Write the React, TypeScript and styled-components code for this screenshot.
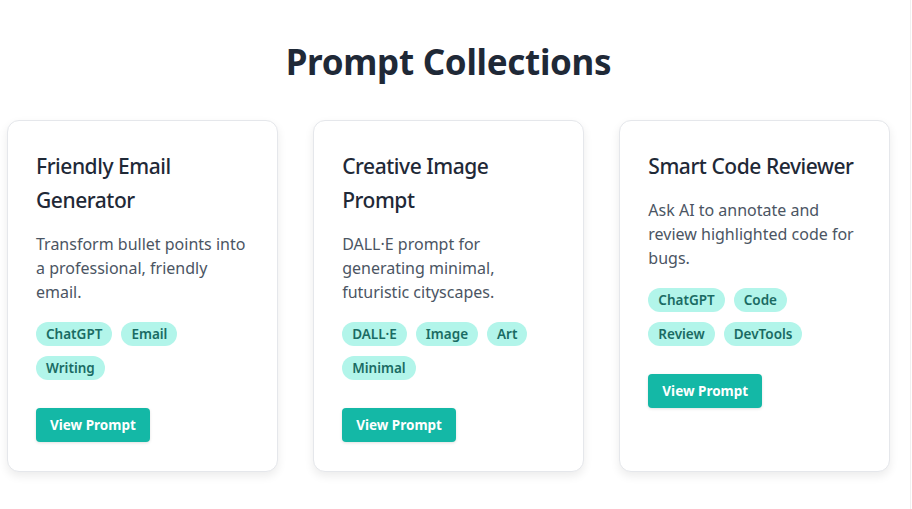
import React, { ReactElement } from 'react';
import styled, { createGlobalStyle } from 'styled-components';

const GlobalStyle = createGlobalStyle`
  html, body {
    margin: 0;
    padding: 0;
    background: #ffffff;
  }
  body {
    font-family: 'Noto Sans', 'Open Sans', sans-serif;
    color: #1f2937;
  }
  * {
    box-sizing: border-box;
  }
`;

const Page = styled.div`
  min-height: 509px;
  width: 911px;
  border-right: 1px solid #f0f0f0;
  padding: 0 20px 0 7px;
`;

const Container = styled.div`
  display: flex;
  flex-direction: column;
  align-items: center;
`;

const Heading = styled.h1`
  margin: 36px 0 0;
  font-size: 35px;
  line-height: 52px;
  font-weight: 700;
  color: #1f2937;
  letter-spacing: -0.3px;
`;

const Grid = styled.div`
  width: 100%;
  margin-top: 32px;
  display: grid;
  grid-template-columns: repeat(3, 1fr);
  gap: 35.5px;
`;

const Card = styled.div`
  display: flex;
  flex-direction: column;
  align-items: flex-start;
  background: #ffffff;
  border: 1px solid #e5e7eb;
  border-radius: 12px;
  padding: 28px;
  box-shadow: 0 4px 10px rgba(0, 0, 0, 0.08);
  height: 352px;
`;

const Title = styled.h2`
  margin: 0;
  font-size: 21px;
  line-height: 34px;
  font-weight: 500;
  color: #1f2937;
  letter-spacing: -0.45px;
`;

const Description = styled.p`
  margin: 15px 0 0;
  font-size: 16px;
  line-height: 24px;
  color: #4b5563;
`;

const Tags = styled.div`
  display: flex;
  flex-wrap: wrap;
  gap: 10px 9px;
  margin-top: 18px;
`;

const Tag = styled.span`
  display: inline-flex;
  align-items: center;
  height: 24px;
  padding: 0 10px;
  border-radius: 12px;
  background: #b2f5ea;
  color: #1a6b63;
  font-size: 13.5px;
  font-weight: 600;
`;

const ViewButton = styled.button`
  margin-top: 28px;
  height: 34px;
  padding: 0 14px;
  border: none;
  border-radius: 4px;
  background: #14b8a6;
  color: #ffffff;
  font-family: inherit;
  font-size: 13.5px;
  font-weight: 700;
  box-shadow: 0 1px 3px rgba(0, 0, 0, 0.12);
  cursor: pointer;
`;

interface IPrompt {
  id: string;
  title: string;
  description: string;
  tags: string[];
}

const prompts: IPrompt[] = [
  {
    id: 'email',
    title: 'Friendly Email Generator',
    description: 'Transform bullet points into a professional, friendly email.',
    tags: ['ChatGPT', 'Email', 'Writing'],
  },
  {
    id: 'image',
    title: 'Creative Image Prompt',
    description: 'DALL·E prompt for generating minimal, futuristic cityscapes.',
    tags: ['DALL·E', 'Image', 'Art', 'Minimal'],
  },
  {
    id: 'code',
    title: 'Smart Code Reviewer',
    description: 'Ask AI to annotate and review highlighted code for bugs.',
    tags: ['ChatGPT', 'Code', 'Review', 'DevTools'],
  },
];

const App = (): ReactElement => (
  <>
    <GlobalStyle />
    <Page>
      <Container>
        <Heading>Prompt Collections</Heading>
        <Grid>
          {prompts.map(p => (
            <Card key={p.id}>
              <Title>{p.title}</Title>
              <Description>{p.description}</Description>
              <Tags>
                {p.tags.map(t => <Tag key={t}>{t}</Tag>)}
              </Tags>
              <ViewButton>View Prompt</ViewButton>
            </Card>
          ))}
        </Grid>
      </Container>
    </Page>
  </>
);

export default App;
